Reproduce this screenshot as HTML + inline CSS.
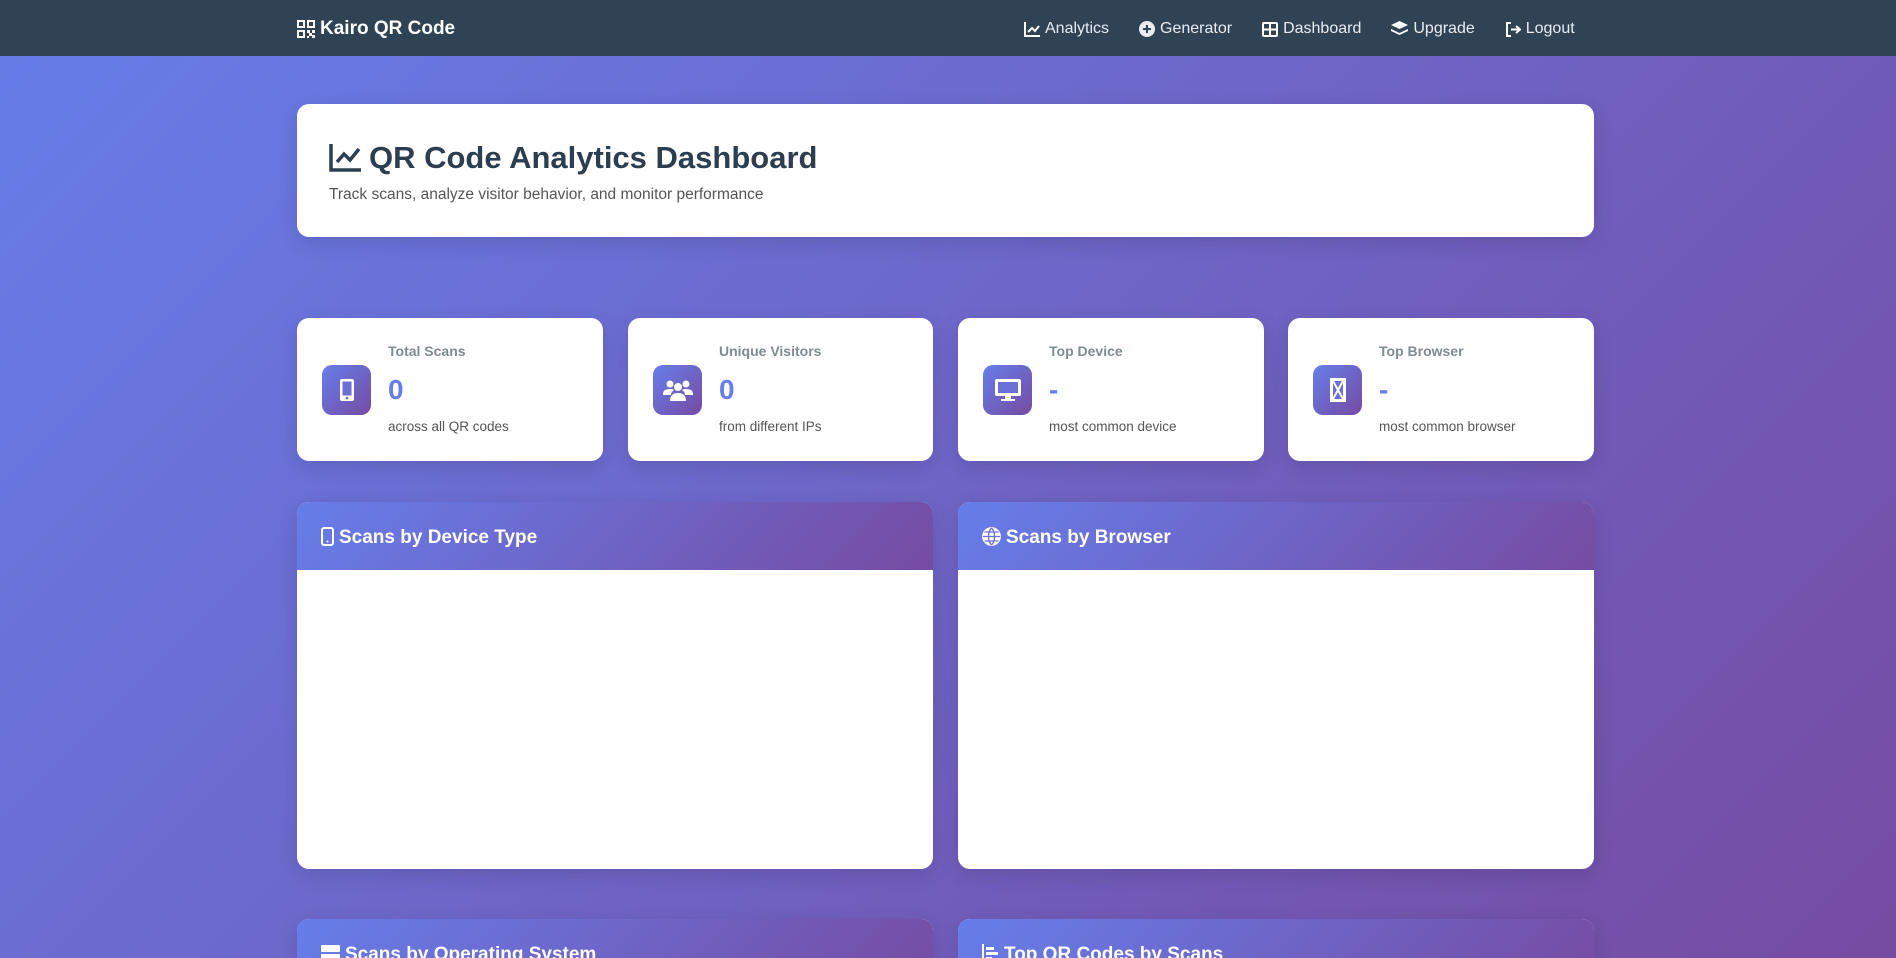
<!DOCTYPE html>
<html style="width:1896px;height:958px;overflow:hidden"><head><meta charset="utf-8"><style>
*{box-sizing:border-box;margin:0;padding:0}
body{width:1896px;height:958px;overflow:hidden;font-family:"Liberation Sans",sans-serif;background:linear-gradient(135deg,#667eea 0%,#764ba2 100%);position:relative}
.nav{position:absolute;left:0;top:0;width:1896px;height:56px;background:#2f4354;color:#fff}
.brand{position:absolute;left:297px;top:18px;font-size:19px;font-weight:bold;display:flex;align-items:center;gap:5px}
.links{position:absolute;left:1024px;top:20px;display:flex;font-size:16px;color:#e8ecf2}
.links span{display:flex;align-items:center;gap:5px;margin-right:30px}
.card{position:absolute;background:#fff;border-radius:12px;box-shadow:0 6px 20px rgba(0,0,0,.12)}
.hdr h1{position:absolute;left:32px;top:36px;font-size:31px;color:#2c3e50;font-weight:bold;display:flex;align-items:center;gap:8px}
.hdr p{position:absolute;left:32px;top:82px;font-size:15.5px;color:#555}
.stat .ic{position:absolute;left:25px;top:47px;width:49px;height:50px;border-radius:10px;background:linear-gradient(135deg,#667eea,#764ba2);display:flex;align-items:center;justify-content:center}
.stat .l{position:absolute;left:91px;top:25px;font-size:14px;font-weight:bold;color:#7f8c8d}
.stat .v{position:absolute;left:91px;top:56px;font-size:28px;font-weight:bold;color:#667eea}
.stat .s{position:absolute;left:91px;top:101px;font-size:13.5px;color:#555}
.chart{overflow:hidden}
.chart .h{height:68px;background:linear-gradient(135deg,#667eea,#764ba2);color:#fff;font-size:19px;font-weight:bold;padding:25px 0 0 24px;display:flex;align-items:flex-start;gap:5px}
</style></head><body>
<div class="nav">
<div class="brand"><svg width="18" height="18" viewBox="0 0 18 18" fill="#fff"><path d="M0 0h8v8H0zM2 2v4h4V2zM10 0h8v8h-8zM12 2v4h4V2zM0 10h8v8H0zM2 12v4h4v-4zM10 10h3v3h-3zM15 10h3v3h-3zM12 13h3v3h-3zM10 16h2v2h-2zM15 15h3v3h-3z"/></svg>Kairo QR Code</div>
<div class="links">
<span><svg width="16" height="15" viewBox="0 0 16 15" fill="none" stroke="#fff" stroke-width="2"><path d="M1 0v14h15M4 10l4-4 3 3 4-5"/></svg>Analytics</span>
<span><svg width="16" height="16" viewBox="0 0 16 16"><circle cx="8" cy="8" r="8" fill="#e8ecf2"/><path d="M8 4v8M4 8h8" stroke="#2f4354" stroke-width="2"/></svg>Generator</span>
<span><svg width="16" height="15" viewBox="0 0 16 15" fill="none" stroke="#fff" stroke-width="2"><rect x="1" y="1" width="14" height="13" rx="1"/><path d="M8 1v13M1 7.5h14"/></svg>Dashboard</span>
<span><svg width="17" height="16" viewBox="0 0 17 16" fill="#fff"><path d="M8.5 0L17 4 8.5 8 0 4zM0 8l8.5 4L17 8v2l-8.5 4L0 10z"/></svg>Upgrade</span>
<span><svg width="16" height="15" viewBox="0 0 16 15" fill="none" stroke="#fff" stroke-width="2"><path d="M6 1H2v13h4M6 7.5h9M11 4l4 3.5-4 3.5"/></svg>Logout</span>
</div></div>

<div class="card hdr" style="left:297px;top:104px;width:1297px;height:133px">
<h1><svg width="32" height="28" viewBox="0 0 32 28" fill="none" stroke="#2c3e50" stroke-width="3.5"><path d="M2 0v26h30M8 18l7-8 6 6 9-11"/></svg>QR Code Analytics Dashboard</h1>
<p>Track scans, analyze visitor behavior, and monitor performance</p></div>

<div class="card stat" style="left:297px;top:318px;width:306px;height:143px"><div class="ic"><svg width="16" height="24" viewBox="0 0 16 24"><rect x="1" y="1" width="14" height="22" rx="2" fill="#fff"/><rect x="3.5" y="3.5" width="9" height="14" fill="#6b6fd6"/><circle cx="8" cy="20" r="1.3" fill="#6b6fd6"/></svg></div><div class="l">Total Scans</div><div class="v">0</div><div class="s">across all QR codes</div></div>
<div class="card stat" style="left:628px;top:318px;width:305px;height:143px"><div class="ic"><svg width="30" height="22" viewBox="0 0 30 22" fill="#fff"><circle cx="7" cy="5" r="3.5"/><circle cx="23" cy="5" r="3.5"/><circle cx="15" cy="8" r="4"/><path d="M0 15q0-5 7-5 3 0 4 1-3 2-3 5H0zM30 15q0-5-7-5-3 0-4 1 3 2 3 5h8zM7 22q0-8 8-8t8 8z"/></svg></div><div class="l">Unique Visitors</div><div class="v">0</div><div class="s">from different IPs</div></div>
<div class="card stat" style="left:958px;top:318px;width:306px;height:143px"><div class="ic"><svg width="28" height="24" viewBox="0 0 28 24"><rect x="1" y="1" width="26" height="17" rx="2" fill="#fff"/><rect x="4" y="4" width="20" height="11" fill="#6b6fd6"/><path d="M11 18h6v3h4v2H7v-2h4z" fill="#fff"/></svg></div><div class="l">Top Device</div><div class="v">-</div><div class="s">most common device</div></div>
<div class="card stat" style="left:1288px;top:318px;width:306px;height:143px"><div class="ic"><svg width="18" height="26" viewBox="0 0 18 26"><rect x="1" y="1" width="16" height="24" fill="#fff"/><rect x="4" y="4" width="10" height="18" fill="#6b6fd6"/><path d="M4 4l10 18M14 4L4 22" stroke="#fff" stroke-width="2"/></svg></div><div class="l">Top Browser</div><div class="v">-</div><div class="s">most common browser</div></div>

<div class="card chart" style="left:297px;top:502px;width:636px;height:367px"><div class="h"><svg width="13" height="19" viewBox="0 0 13 19"><rect x="1" y="1" width="11" height="17" rx="2" fill="none" stroke="#fff" stroke-width="2"/><circle cx="6.5" cy="14.5" r="1" fill="#fff"/></svg>Scans by Device Type</div></div>
<div class="card chart" style="left:958px;top:502px;width:636px;height:367px"><div class="h"><svg width="19" height="19" viewBox="0 0 19 19" fill="none" stroke="#fff" stroke-width="1.8"><circle cx="9.5" cy="9.5" r="8.5" fill="#fff"/><path d="M1 9.5h17M9.5 1c-4 4-4 13 0 17M9.5 1c4 4 4 13 0 17M2.5 5h14M2.5 14h14" stroke="#6b6fd6" stroke-width="1.3"/></svg>Scans by Browser</div></div>
<div class="card chart" style="left:297px;top:919px;width:636px;height:39px;border-radius:12px 12px 0 0"><div class="h"><svg width="19" height="19" viewBox="0 0 19 19" fill="#fff"><rect x="0" y="1" width="19" height="7" rx="1"/><rect x="0" y="10" width="19" height="7" rx="1"/></svg>Scans by Operating System</div></div>
<div class="card chart" style="left:958px;top:919px;width:636px;height:39px;border-radius:12px 12px 0 0"><div class="h"><svg width="17" height="19" viewBox="0 0 17 19" fill="#fff"><rect x="0" y="0" width="2" height="19"/><rect x="4" y="3" width="8" height="3"/><rect x="4" y="8" width="12" height="3"/><rect x="4" y="13" width="6" height="3"/></svg>Top QR Codes by Scans</div></div>
</body></html>
